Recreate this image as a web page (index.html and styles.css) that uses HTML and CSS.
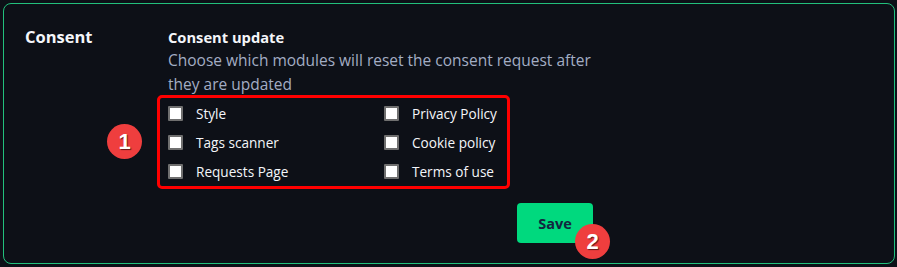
FILE: index.html
```html
<!DOCTYPE html>
<html lang="en">
<head>
<meta charset="utf-8">
<title>Consent</title>
<link rel="stylesheet" href="styles.css">
</head>
<body>
<section class="card">
  <h2 class="section-title">Consent</h2>
  <div class="content">
    <h3 class="field-title">Consent update</h3>
    <p class="field-desc">Choose which modules will reset the consent request after they are updated</p>
    <div class="options-wrap">
      <span class="badge badge-1">1</span>
      <div class="options">
        <label class="option"><span class="box"></span><span>Style</span></label>
        <label class="option"><span class="box"></span><span>Privacy Policy</span></label>
        <label class="option"><span class="box"></span><span>Tags scanner</span></label>
        <label class="option"><span class="box"></span><span>Cookie policy</span></label>
        <label class="option"><span class="box"></span><span>Requests Page</span></label>
        <label class="option"><span class="box"></span><span>Terms of use</span></label>
      </div>
    </div>
    <div class="actions">
      <button class="save">Save<span class="badge badge-2">2</span></button>
    </div>
  </div>
</section>
</body>
</html>
```
FILE: styles.css
```css
html, body {
  margin: 0;
  padding: 0;
  background: #0d1017;
}
body {
  padding: 3px;
  font-family: "Open Sans", "Noto Sans", sans-serif;
  color: #f4f6fa;
}
.card {
  box-sizing: border-box;
  width: 892px;
  height: 261px;
  border: 1px solid #22c07c;
  border-radius: 8px;
  background: #0d1017;
  display: flex;
  padding: 21px 0 0 21px;
}
.section-title {
  margin: 0;
  width: 143px;
  font-size: 16.5px;
  font-weight: 700;
  line-height: 24px;
}
.content {
  width: 425px;
  display: flex;
  flex-direction: column;
}
.field-title {
  margin: 0;
  font-size: 14.7px;
  font-weight: 700;
  line-height: 24px;
}
.field-desc {
  margin: 0;
  font-size: 15.5px;
  line-height: 23.5px;
  color: #a3adc4;
}
.options-wrap {
  position: relative;
  margin-top: -1px;
}
.options {
  display: grid;
  grid-template-columns: 216px auto;
  width: max-content;
  margin-left: -11px;
  padding: 1px 10px 0 8px;
  border: 3px solid #ff0000;
  border-radius: 5px;
}
.option {
  display: flex;
  align-items: center;
  gap: 13px;
  height: 29px;
  font-size: 13.6px;
  color: #f4f6fa;
}
.box {
  box-sizing: border-box;
  width: 15px;
  height: 15px;
  background: #ffffff;
  border: 2px solid #6f6f6f;
  border-radius: 1px;
}
.actions {
  display: flex;
  justify-content: flex-end;
  margin-top: 14px;
}
.save {
  position: relative;
  width: 76px;
  height: 40px;
  border: none;
  border-radius: 4px;
  background: #00d97e;
  color: #12263f;
  font-family: inherit;
  font-size: 14.5px;
  font-weight: 700;
}
.badge {
  position: absolute;
  width: 35px;
  height: 35px;
  border-radius: 50%;
  background: #ef3e3e;
  color: #ffffff;
  font-family: "Liberation Sans", sans-serif;
  font-weight: 700;
  font-size: 22px;
  line-height: 35px;
  text-align: center;
  text-shadow: 1px 1px 1px rgba(0, 0, 0, 0.6);
}
.badge-1 {
  left: -61px;
  top: 29px;
}
.badge-2 {
  left: 58px;
  top: 21px;
}
```
